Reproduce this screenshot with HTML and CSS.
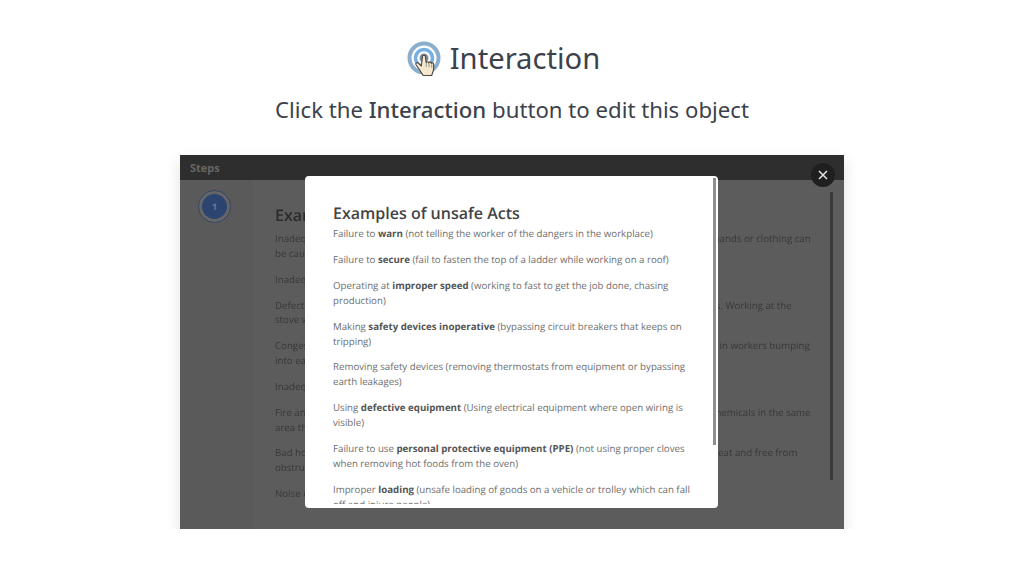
FILE: index.html
```html
<!DOCTYPE html>
<html lang="en">
<head>
    <meta charset="UTF-8">
    <meta name="viewport" content="width=device-width, initial-scale=1.0">
    <title>Interaction</title>
    <link rel="stylesheet" href="styles.css">
</head>
<body>
    <div class="heading">
        <svg class="heading-icon" width="36" height="38" viewBox="0 0 36 38">
            <circle cx="17" cy="17" r="14.5" fill="#fff" stroke="#8aaecb" stroke-width="4"/>
            <circle cx="17" cy="17" r="8.5" fill="#fff" stroke="#74aee2" stroke-width="3.5"/>
            <circle cx="17" cy="17" r="4.5" fill="#7f8ea3"/>
            <path d="M15.5 15.5c0-1.8 2.8-1.8 2.9 0l.8 6.2c.2-1.4 2.4-1.3 2.6.2.3-1.2 2.4-1 2.6.5.4-1 2.2-.7 2.3.8.2 3.2.2 6.300-1.500 9.800l-.5 1.500h-8.500l-4.200-6.500-3-4.200c-.9-1.500 1-2.800 2.300-1.600l3 2.800z" fill="#f6e8cf" stroke="#4a443c" stroke-width="1.100" stroke-linejoin="round"/>
            <path d="M19.300 22v4M22 22.200v4M24.700 23.300v3.500" fill="none" stroke="#8c8272" stroke-width=".8"/>
        </svg>
        <h1>Interaction</h1>
    </div>
    <p class="subtitle">Click the <b>Interaction</b> button to edit this object</p>

    <div class="frame">
        <div class="topbar">Steps</div>
        <div class="frame-body">
            <div class="steps">
                <div class="step-ring"><span class="step-dot">1</span></div>
            </div>
            <div class="lesson">
                <h2>Examples of unsafe conditions</h2>
                <p>Inadequate guarding on machines and equipment, where moving parts are exposed and a staff's hands or clothing can be caught in the machine</p>
                <p>Inadequate or missing warning signs</p>
                <p>Defective tools and equipment, such as stoves with loose wirings and faulty switches on appliances. Working at the stove with a faulty plug</p>
                <p>Congested work areas and very narrow passages in all the kitchen areas, which can so often result in workers bumping into each other</p>
                <p>Inadequate lighting or ventilation in the workplace (too dark or with too little air flow possible)</p>
                <p>Fire and explosion hazards, such as storing old flammable liquids and all other highly dangerous chemicals in the same area that food is being prepared</p>
                <p>Bad housekeeping, where the kitchen floors and all of the main work areas are not all being kept neat and free from obstructions</p>
                <p>Noise exposure</p>
            </div>
            <div class="frame-scroll"></div>
        </div>

        <div class="modal">
            <div class="modal-content">
                <h3>Examples of unsafe Acts</h3>
                <p>Failure to <b>warn</b> (not telling the worker of the dangers in the workplace)</p>
                <p>Failure to <b>secure</b> (fail to fasten the top of a ladder while working on a roof)</p>
                <p>Operating at <b>improper speed</b> (working to fast to get the job done, chasing production)</p>
                <p>Making <b>safety devices inoperative</b> (bypassing circuit breakers that keeps on tripping)</p>
                <p>Removing safety devices (removing thermostats from equipment or bypassing earth leakages)</p>
                <p>Using <b>defective equipment</b> (Using electrical equipment where open wiring is visible)</p>
                <p>Failure to use <b>personal protective equipment (PPE)</b> (not using proper cloves when removing hot foods from the oven)</p>
                <p>Improper <b>loading</b> (unsafe loading of goods on a vehicle or trolley which can fall off and injure people)</p>
            </div>
            <div class="modal-scroll"></div>
        </div>

        <button class="close-btn" type="button">
            <svg width="10" height="10" viewBox="0 0 10 10">
                <path d="M1 1l8 8M9 1l-8 8" stroke="#e6e6e6" stroke-width="1.500" fill="none"/>
            </svg>
        </button>
    </div>
</body>
</html>
```

FILE: styles.css
```css
body {
    margin: 0;
    padding: 0;
    background-color: #fff;
    font-family: "Noto Sans", Arial, sans-serif;
    color: #3c424b;
}

.heading {
    display: flex;
    justify-content: center;
    align-items: center;
    gap: 7px;
    height: 44px;
    padding: 36px 17px 0 0;
}

.heading-icon {
    margin-top: 4px;
}

.heading h1 {
    margin: 0;
    font-size: 29.200px;
    font-weight: 400;
}

.subtitle {
    margin: 13px 0 0;
    text-align: center;
    font-size: 22.200px;
    line-height: 34px;
}

.subtitle b {
    font-weight: 500;
}

.frame {
    position: relative;
    width: 664px;
    height: 374px;
    margin: 28px auto 0;
    background-color: #5c5c5c;
    box-shadow: 0 6px 14px rgba(0, 0, 0, 0.12);
    font-family: "Open Sans", Arial, sans-serif;
    text-rendering: geometricPrecision;
}

.topbar {
    height: 25px;
    padding-left: 10px;
    background-color: #2e2e2e;
    color: #666;
    font-size: 11px;
    font-weight: 700;
    line-height: 27px;
}

.frame-body {
    position: relative;
    display: flex;
    height: 349px;
    overflow: hidden;
}

.steps {
    width: 73px;
    background-color: #5a5a5a;
    padding: 10px 0 0 18px;
    box-sizing: border-box;
}

.step-ring {
    display: flex;
    justify-content: center;
    align-items: center;
    width: 33px;
    height: 33px;
    box-sizing: border-box;
    border: 1px solid #33466a;
    border-radius: 50%;
    background-color: #666;
}

.step-dot {
    width: 25px;
    height: 25px;
    border-radius: 50%;
    background-color: #2c4570;
    color: #6d7a90;
    font-size: 9px;
    font-weight: 700;
    line-height: 25px;
    text-align: center;
}

.lesson {
    width: 538px;
    padding: 22px 0 0 22px;
    color: #383838;
    font-size: 9.700px;
    line-height: 14.900px;
    filter: blur(0.4px);
}

.lesson h2 {
    margin: 0 0 4px;
    color: #2b2b2b;
    font-size: 16px;
    font-weight: 600;
    line-height: 26px;
}

.lesson p {
    margin: 0 0 10.900px;
}

.frame-scroll {
    position: absolute;
    top: 12px;
    left: 650px;
    width: 3px;
    height: 288px;
    background-color: #3a3a3a;
}

.modal {
    position: absolute;
    top: 21px;
    left: 125px;
    width: 413px;
    height: 332px;
    border-radius: 4px;
    background-color: #fff;
}

.modal-content {
    height: 328px;
    box-sizing: border-box;
    padding: 25px 28px 0;
    overflow: hidden;
    color: #6e6e6e;
    font-size: 9.700px;
    line-height: 14.900px;
}

.modal-content h3 {
    margin: 0 0 1px;
    color: #444;
    font-size: 16px;
    font-weight: 600;
    line-height: 25px;
}

.modal-content p {
    margin: 0 0 11px;
}

.modal-content b {
    color: #555;
    font-weight: 700;
}

.modal-scroll {
    position: absolute;
    top: 2px;
    right: 2px;
    width: 3px;
    height: 267px;
    background-color: #8f8f8f;
}

.close-btn {
    position: absolute;
    top: 8px;
    left: 631px;
    display: flex;
    justify-content: center;
    align-items: center;
    width: 24px;
    height: 24px;
    padding: 0;
    border: none;
    border-radius: 50%;
    background-color: #1f1f1f;
}
```
